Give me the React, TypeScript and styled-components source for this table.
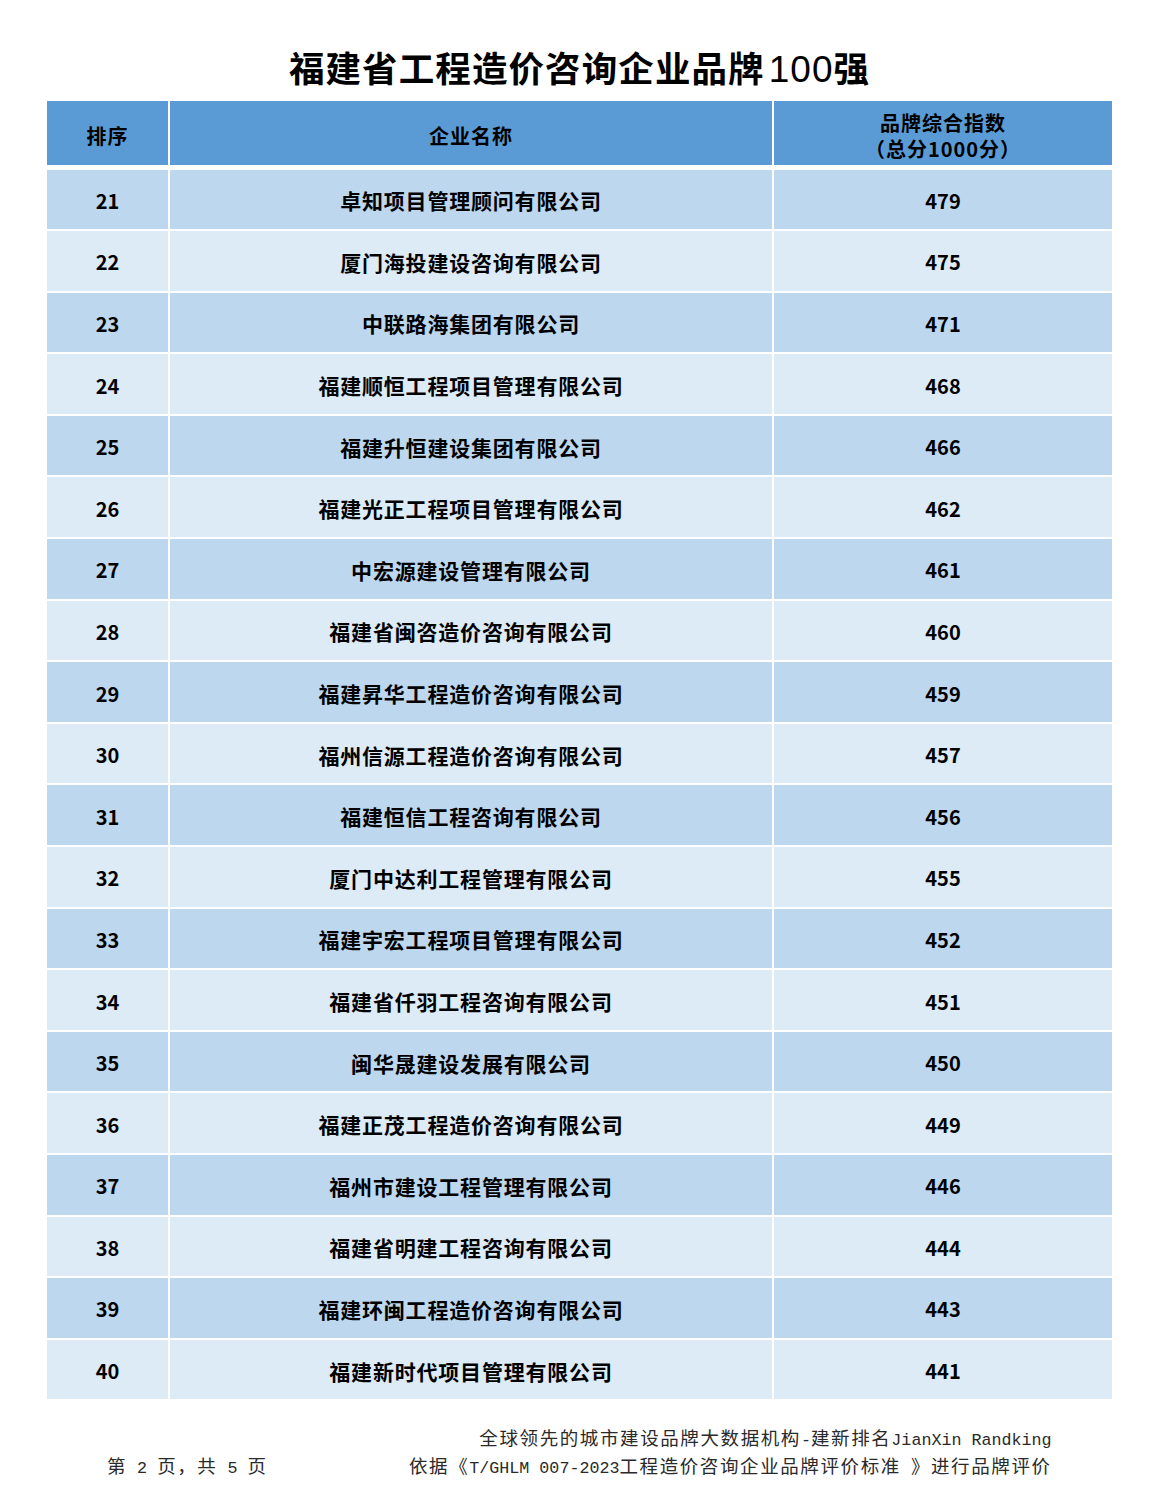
import React from "react";
import styled, { createGlobalStyle } from "styled-components";

interface IEntry {
  rank: number;
  name: string;
  score: number;
}

const entries: IEntry[] = [
  { rank: 21, name: "卓知项目管理顾问有限公司", score: 479 },
  { rank: 22, name: "厦门海投建设咨询有限公司", score: 475 },
  { rank: 23, name: "中联路海集团有限公司", score: 471 },
  { rank: 24, name: "福建顺恒工程项目管理有限公司", score: 468 },
  { rank: 25, name: "福建升恒建设集团有限公司", score: 466 },
  { rank: 26, name: "福建光正工程项目管理有限公司", score: 462 },
  { rank: 27, name: "中宏源建设管理有限公司", score: 461 },
  { rank: 28, name: "福建省闽咨造价咨询有限公司", score: 460 },
  { rank: 29, name: "福建昇华工程造价咨询有限公司", score: 459 },
  { rank: 30, name: "福州信源工程造价咨询有限公司", score: 457 },
  { rank: 31, name: "福建恒信工程咨询有限公司", score: 456 },
  { rank: 32, name: "厦门中达利工程管理有限公司", score: 455 },
  { rank: 33, name: "福建宇宏工程项目管理有限公司", score: 452 },
  { rank: 34, name: "福建省仟羽工程咨询有限公司", score: 451 },
  { rank: 35, name: "闽华晟建设发展有限公司", score: 450 },
  { rank: 36, name: "福建正茂工程造价咨询有限公司", score: 449 },
  { rank: 37, name: "福州市建设工程管理有限公司", score: 446 },
  { rank: 38, name: "福建省明建工程咨询有限公司", score: 444 },
  { rank: 39, name: "福建环闽工程造价咨询有限公司", score: 443 },
  { rank: 40, name: "福建新时代项目管理有限公司", score: 441 },
];

const GlobalStyle = createGlobalStyle`
  html, body {
    margin: 0;
    padding: 0;
    background: #ffffff;
  }
  body {
    font-family: "Noto Sans CJK SC", "Noto Sans", sans-serif;
    color: #000;
  }
`;

const App: React.FC = () => {
  return (
    <>
      <GlobalStyle />
      <Page>
        <Title>
          福建省工程造价咨询企业品牌<TitleDigits>100</TitleDigits>强
        </Title>
        <Table>
          <HeaderRow>
            <HeadCell>排序</HeadCell>
            <HeadCell>企业名称</HeadCell>
            <HeadCell>
              <span>品牌综合指数</span>
              <span>（总分1000分）</span>
            </HeadCell>
          </HeaderRow>
          {entries.map((entry, i) => (
            <Row key={entry.rank} $alt={i % 2 === 1}>
              <NumCell>{entry.rank}</NumCell>
              <NameCell>{entry.name}</NameCell>
              <NumCell>{entry.score}</NumCell>
            </Row>
          ))}
        </Table>
        <Footer>
          <PageNo>
            第<Latin> 2 </Latin>页，共<Latin> 5 </Latin>页
          </PageNo>
          <Notes>
            <NoteLine>
              全球领先的城市建设品牌大数据机构<Latin>-</Latin>建新排名
              <Latin>JianXin Randking</Latin>
            </NoteLine>
            <NoteLine>
              依据《<Latin>T/GHLM 007-2023</Latin>工程造价咨询企业品牌评价标准
              <Latin> </Latin>》进行品牌评价
            </NoteLine>
          </Notes>
        </Footer>
      </Page>
    </>
  );
};

const Page = styled.div`
  width: 1159px;
  min-height: 1500px;
  display: flex;
  flex-direction: column;
  align-items: center;
`;

const Title = styled.h1`
  margin: 45px 0 12px;
  height: 44px;
  font-size: 35.5px;
  line-height: 44px;
  font-weight: 700;
  letter-spacing: 1.1px;
  white-space: nowrap;
`;

const TitleDigits = styled.span`
  font-family: "Liberation Sans", "Noto Sans CJK SC", sans-serif;
  font-weight: 400;
  font-size: 37px;
  line-height: 1;
  margin-left: 4px;
  letter-spacing: 1px;
`;

const Table = styled.div`
  width: 1065px;
  display: flex;
  flex-direction: column;
  gap: 2px;
`;

const columns = "121px 602px 338px";

const HeaderRow = styled.div`
  display: grid;
  grid-template-columns: ${columns};
  column-gap: 2px;
  height: 64px;
  margin-bottom: 2.5px;
`;

const HeadCell = styled.div`
  background: #5b9bd5;
  display: flex;
  flex-direction: column;
  align-items: center;
  justify-content: center;
  padding-top: 5px;
  box-sizing: border-box;
  font-size: 20px;
  line-height: 26px;
  font-weight: 700;
  letter-spacing: 1px;
`;

const Row = styled.div<{ $alt: boolean }>`
  display: grid;
  grid-template-columns: ${columns};
  column-gap: 2px;
  height: 59.6px;

  & > div {
    background: ${(p) => (p.$alt ? "#ddebf7" : "#bdd7ee")};
  }
`;

const NameCell = styled.div`
  display: flex;
  align-items: center;
  justify-content: center;
  font-size: 21px;
  font-weight: 700;
  letter-spacing: 0.8px;
  padding-top: 2px;
  box-sizing: border-box;
`;

const NumCell = styled(NameCell)`
  font-size: 20px;
  letter-spacing: 0;
`;

const Footer = styled.div`
  width: 1065px;
  box-sizing: border-box;
  padding: 0 62px 0 60px;
  margin-top: 26px;
  display: flex;
  justify-content: space-between;
  align-items: flex-end;
  font-family: "Noto Sans CJK SC", sans-serif;
  font-size: 18.5px;
  letter-spacing: 1.6px;
  line-height: 24px;
  color: #2a2a2a;
  white-space: pre;
`;

const PageNo = styled.div``;

const Notes = styled.div`
  display: flex;
  flex-direction: column;
  align-items: flex-end;
`;

const NoteLine = styled.div`
  margin-right: -1.6px;
`;

const Latin = styled.span`
  font-family: "Liberation Mono", monospace;
  font-size: 16.7px;
  letter-spacing: 0;
`;

export default App;
